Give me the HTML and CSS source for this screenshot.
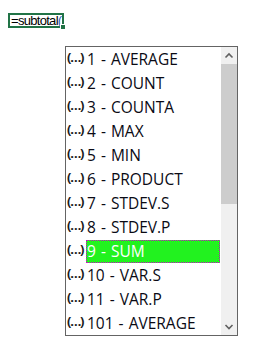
FILE: index.html
```html
<!DOCTYPE html>
<html>
<head>
<meta charset="utf-8">
<link rel="stylesheet" href="styles.css">
</head>
<body>
<div class="cell"><span class="formula">=subtotal<span class="paren">(</span></span><span class="handle"></span></div>
<div class="dropdown">
  <div class="list">
    <div class="row"><span class="icon">(…)</span><span class="label">1 - AVERAGE</span></div>
    <div class="row"><span class="icon">(…)</span><span class="label">2 - COUNT</span></div>
    <div class="row"><span class="icon">(…)</span><span class="label">3 - COUNTA</span></div>
    <div class="row"><span class="icon">(…)</span><span class="label">4 - MAX</span></div>
    <div class="row"><span class="icon">(…)</span><span class="label">5 - MIN</span></div>
    <div class="row"><span class="icon">(…)</span><span class="label">6 - PRODUCT</span></div>
    <div class="row"><span class="icon">(…)</span><span class="label">7 - STDEV.S</span></div>
    <div class="row"><span class="icon">(…)</span><span class="label">8 - STDEV.P</span></div>
    <div class="row sel"><span class="icon">(…)</span><span class="label">9 - SUM</span></div>
    <div class="row"><span class="icon">(…)</span><span class="label">10 - VAR.S</span></div>
    <div class="row"><span class="icon">(…)</span><span class="label">11 - VAR.P</span></div>
    <div class="row"><span class="icon">(…)</span><span class="label">101 - AVERAGE</span></div>
  </div>
  <div class="sb">
    <div class="btn"><svg width="16" height="17" viewBox="0 0 16 17"><path d="M4.5 10.5 L8 7 L11.5 10.5" fill="none" stroke="#606060" stroke-width="1.6"/></svg></div>
    <div class="thumb"></div>
    <div class="track"></div>
    <div class="btn"><svg width="16" height="17" viewBox="0 0 16 17"><path d="M4.5 7 L8 10.5 L11.5 7" fill="none" stroke="#606060" stroke-width="1.6"/></svg></div>
  </div>
</div>
</body>
</html>
```
FILE: styles.css
```css
html, body {
  margin: 0;
  padding: 0;
  background: #ffffff;
}
body {
  font-family: "Open Sans", "Noto Sans", sans-serif;
  width: 257px;
  height: 353px;
  overflow: hidden;
}
.cell {
  position: relative;
  box-sizing: border-box;
  margin: 13px 0 0 8px;
  width: 56px;
  height: 15px;
  border: 2px solid #217346;
  white-space: nowrap;
}
.formula {
  display: block;
  font-family: "Liberation Sans", Arial, sans-serif;
  font-size: 13px;
  letter-spacing: -0.7px;
  line-height: 12px;
  padding-left: 1px;
  color: #000;
}
.paren {
  color: #2a5db0;
}
.handle {
  position: absolute;
  right: -4px;
  bottom: -4px;
  width: 4px;
  height: 4px;
  background: #217346;
  border: 1px solid #fff;
}
.dropdown {
  box-sizing: border-box;
  margin: 18px 0 0 65px;
  width: 173px;
  height: 290px;
  border: 1px solid #646464;
  display: flex;
  background: #fff;
}
.list {
  width: 155px;
}
.row {
  display: flex;
  height: 24px;
}
.icon {
  width: 20px;
  font-size: 13px;
  font-weight: 700;
  line-height: 21px;
  color: #1a1a1a;
  padding-left: 1px;
  box-sizing: border-box;
  letter-spacing: -1.2px;
  white-space: nowrap;
}
.label {
  box-sizing: border-box;
  width: 134px;
  height: 23px;
  margin-top: 1px;
  font-size: 15.5px;
  line-height: 22px;
  color: #0a0a14;
  white-space: nowrap;
  padding-left: 1px;
  word-spacing: 1px;
}
.sel .label {
  background: #22f21f;
  color: #fff;
  border: 1px dotted #d000d0;
  line-height: 20px;
  padding-left: 0;
}
.sb {
  width: 16px;
  display: flex;
  flex-direction: column;
  background: #f0f0f0;
}
.btn {
  height: 17px;
}
.btn svg {
  display: block;
}
.thumb {
  height: 140px;
  background: #cdcdcd;
}
.track {
  flex: 1;
}
```
